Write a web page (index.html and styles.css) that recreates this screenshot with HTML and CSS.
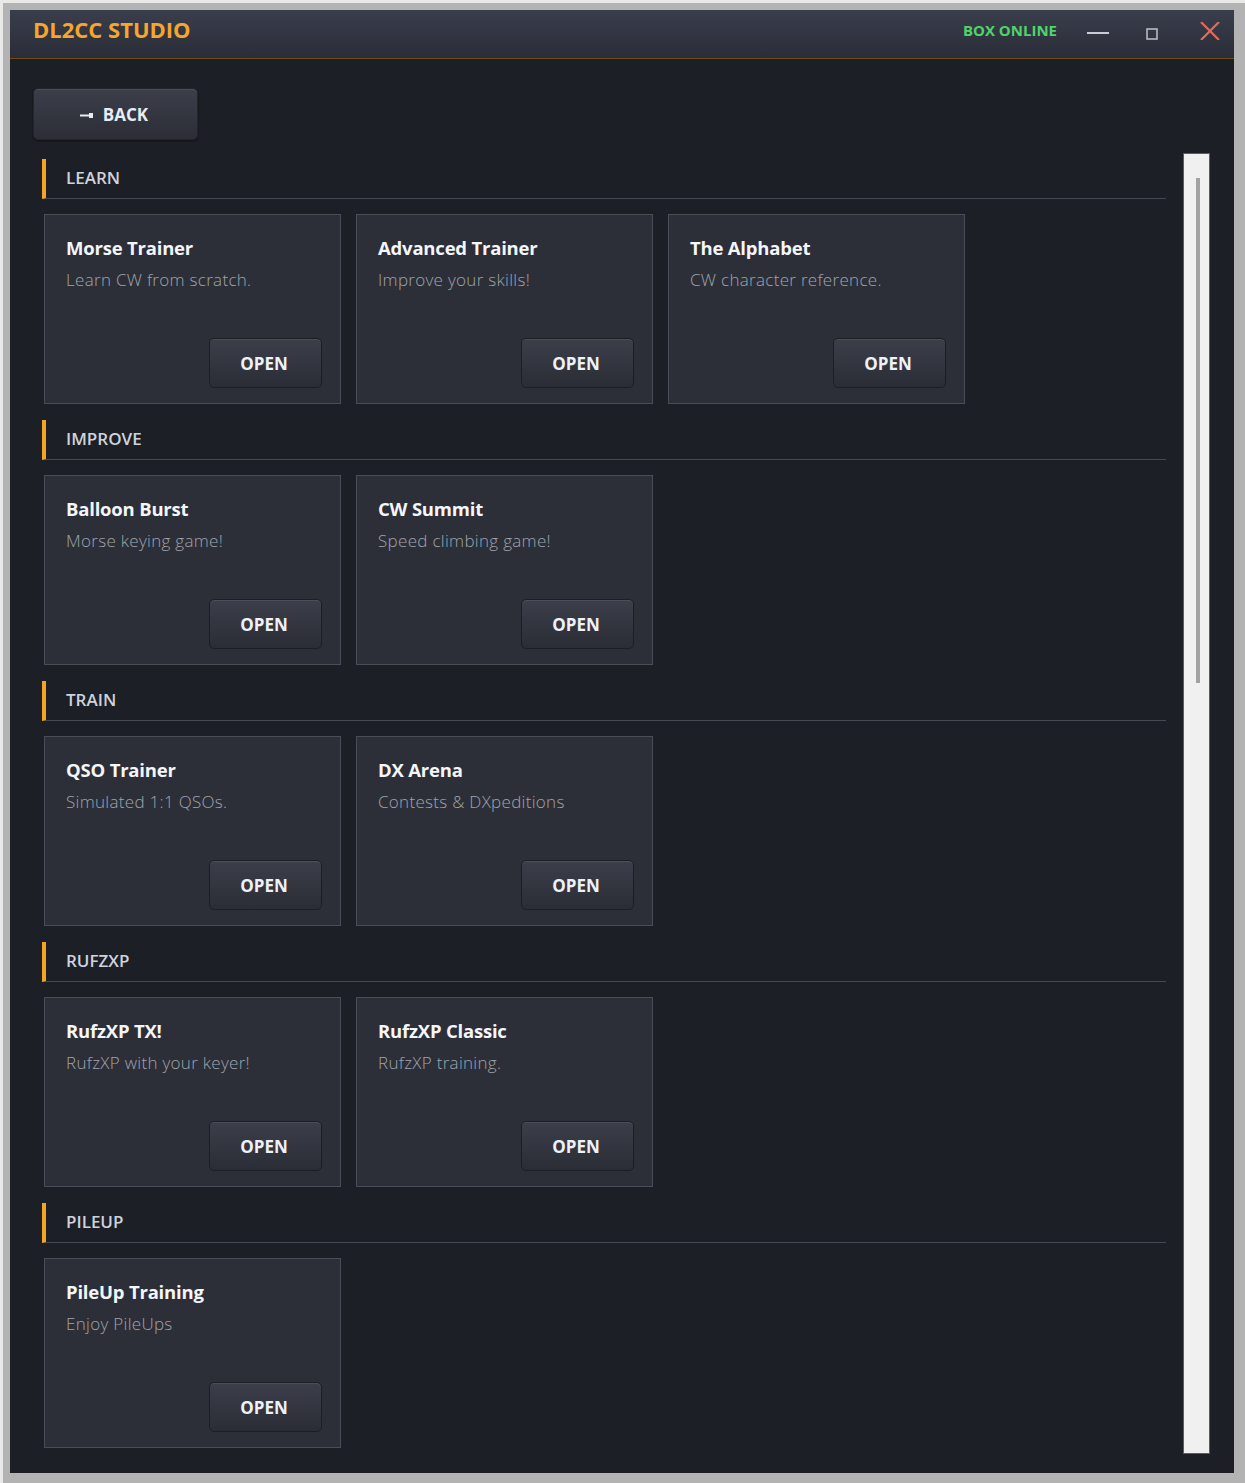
FILE: index.html
```html
<!DOCTYPE html>
<html lang="en">
<head>
<meta charset="UTF-8">
<meta name="viewport" content="width=device-width, initial-scale=1.0">
<title>DL2CC Studio</title>
<link rel="stylesheet" href="styles.css">
</head>
<body>
<div class="frame">
  <div class="window">
    <header class="titlebar">
      <span class="app-title">DL2CC STUDIO</span>
      <span class="status">BOX ONLINE</span>
      <span class="win-btn win-min"><svg width="22" height="4" viewBox="0 0 22 4"><line x1="0" y1="2" x2="22" y2="2" stroke="#c9ccd6" stroke-width="2"/></svg></span>
      <span class="win-btn win-max"><svg width="12" height="12" viewBox="0 0 12 12"><rect x="1" y="1" width="10" height="10" fill="none" stroke="#bfc2cc" stroke-width="1.5"/></svg></span>
      <span class="win-btn win-close"><svg width="20" height="18" viewBox="0 0 20 18"><path d="M1 0 L19 18 M19 0 L1 18" stroke="#e5695b" stroke-width="2.2"/></svg></span>
    </header>

    <main class="content">
      <button class="back-btn"><svg class="back-icon" width="14" height="8" viewBox="0 0 14 8"><line x1="0" y1="4.5" x2="13" y2="4.5" stroke="#e8ecf4" stroke-width="2"/><rect x="9" y="2" width="4" height="5" fill="#e8ecf4"/></svg>BACK</button>

      <div class="scroll-area">
        <div class="sections">
          <section class="group">
            <h3 class="group-title">LEARN</h3>
            <div class="cards">
              <div class="card">
                <h4>Morse Trainer</h4>
                <p>Learn CW from scratch.</p>
                <button class="open-btn">OPEN</button>
              </div>
              <div class="card">
                <h4>Advanced Trainer</h4>
                <p>Improve your skills!</p>
                <button class="open-btn">OPEN</button>
              </div>
              <div class="card">
                <h4>The Alphabet</h4>
                <p>CW character reference.</p>
                <button class="open-btn">OPEN</button>
              </div>
            </div>
          </section>

          <section class="group">
            <h3 class="group-title">IMPROVE</h3>
            <div class="cards">
              <div class="card">
                <h4>Balloon Burst</h4>
                <p>Morse keying game!</p>
                <button class="open-btn">OPEN</button>
              </div>
              <div class="card">
                <h4>CW Summit</h4>
                <p>Speed climbing game!</p>
                <button class="open-btn">OPEN</button>
              </div>
            </div>
          </section>

          <section class="group">
            <h3 class="group-title">TRAIN</h3>
            <div class="cards">
              <div class="card">
                <h4>QSO Trainer</h4>
                <p>Simulated 1:1 QSOs.</p>
                <button class="open-btn">OPEN</button>
              </div>
              <div class="card">
                <h4>DX Arena</h4>
                <p>Contests &amp; DXpeditions</p>
                <button class="open-btn">OPEN</button>
              </div>
            </div>
          </section>

          <section class="group">
            <h3 class="group-title">RUFZXP</h3>
            <div class="cards">
              <div class="card">
                <h4>RufzXP TX!</h4>
                <p>RufzXP with your keyer!</p>
                <button class="open-btn">OPEN</button>
              </div>
              <div class="card">
                <h4>RufzXP Classic</h4>
                <p>RufzXP training.</p>
                <button class="open-btn">OPEN</button>
              </div>
            </div>
          </section>

          <section class="group">
            <h3 class="group-title">PILEUP</h3>
            <div class="cards">
              <div class="card">
                <h4>PileUp Training</h4>
                <p>Enjoy PileUps</p>
                <button class="open-btn">OPEN</button>
              </div>
            </div>
          </section>
        </div>

        <div class="scrollbar"><div class="thumb"></div></div>
      </div>
    </main>
  </div>
</div>
</body>
</html>
```

FILE: styles.css
```css
* {
  box-sizing: border-box;
}
body {
  margin: 0;
  padding: 0;
  background-color: #b3b3b3;
  font-family: "Open Sans", "Noto Sans", sans-serif;
}
.frame {
  width: 1245px;
  height: 1483px;
  padding: 7px 11px 10px 7px;
  background-color: #b3b3b3;
  border-top: 3px solid #e9e9e9;
  border-left: 3px solid #e9e9e9;
}
.window {
  width: 1224px;
  height: 1463px;
  background-color: #1d1f26;
  display: flex;
  flex-direction: column;
}
.titlebar {
  height: 49px;
  display: flex;
  align-items: center;
  padding-left: 23px;
  background: linear-gradient(#3a3e4c, #2a2d37);
  border-bottom: 1px solid #6f4c18;
}
.app-title {
  color: #f6a62e;
  font-weight: 700;
  font-size: 22px;
  letter-spacing: 0;
  flex: 1;
  margin-bottom: 10px;
}
.status {
  color: #4fd46a;
  font-weight: 700;
  font-size: 15px;
  letter-spacing: 0;
  margin-bottom: 9px;
}
.win-btn {
  display: flex;
  align-items: center;
  justify-content: center;
  width: 28px;
  height: 28px;
}
.win-min {
  margin-left: 27px;
  margin-bottom: 2px;
}
.win-max {
  margin-left: 26px;
  margin-bottom: 1px;
}
.win-close {
  margin-left: 30px;
  margin-right: 10px;
  margin-bottom: 7px;
}
.content {
  flex: 1;
  display: flex;
  flex-direction: column;
  padding: 29px 24px 19px 23px;
  min-height: 0;
}
.back-btn {
  width: 165px;
  height: 52px;
  display: flex;
  align-items: center;
  justify-content: center;
  gap: 9px;
  font-family: inherit;
  font-size: 17px;
  font-weight: 700;
  color: #e8ecf4;
  background: linear-gradient(#3c3f4a, #2b2e36);
  border: 1px solid #24262d;
  border-radius: 5px;
  box-shadow: inset 0 1px 0 #4a4e5a, 0 1px 2px rgba(0, 0, 0, 0.5);
  cursor: pointer;
  padding: 0 3px 0 0;
}
.back-icon {
  margin-top: 1px;
}
.scroll-area {
  flex: 1;
  display: flex;
  margin-top: 13px;
  min-height: 0;
  overflow: hidden;
}
.sections {
  width: 1124px;
  margin-left: 9px;
  padding-top: 6px;
}
.group {
  margin-bottom: 16px;
}
.group-title {
  margin: 0;
  height: 40px;
  display: flex;
  align-items: center;
  padding-left: 20px;
  padding-bottom: 2px;
  border-left: 4px solid #f5a524;
  border-bottom: 1px solid #464954;
  color: #cfd3dc;
  font-size: 17px;
  font-weight: 600;
  letter-spacing: 0;
}
.cards {
  display: flex;
  gap: 15px;
  margin-top: 15px;
  padding-left: 2px;
}
.card {
  width: 297px;
  height: 190px;
  display: flex;
  flex-direction: column;
  padding: 20px 18px 15px 21px;
  background-color: #2c2f38;
  border: 1px solid #4a4d58;
}
.card h4 {
  margin: 0;
  color: #f4f6fa;
  font-size: 18.5px;
  font-weight: 700;
  line-height: 26px;
  letter-spacing: -0.2px;
}
.card p {
  margin: 8px 0 0;
  color: #a0a4ae;
  font-size: 17px;
  font-weight: 300;
  line-height: 22px;
  letter-spacing: 0.3px;
}
.open-btn {
  margin-top: auto;
  align-self: flex-end;
  width: 113px;
  height: 50px;
  padding: 0 3px 0 0;
  font-family: inherit;
  font-size: 17px;
  font-weight: 700;
  color: #eef1f7;
  background: linear-gradient(#3c3f4a, #2a2d35);
  border: 1px solid #1c1e24;
  border-radius: 5px;
  box-shadow: inset 0 1px 0 #4b4f5b;
  cursor: pointer;
}
.scrollbar {
  width: 27px;
  height: 1301px;
  margin-left: 17px;
  background-color: #f0f0f0;
  border: 1px solid #5a5c62;
  padding: 24px 0 0 12px;
}
.thumb {
  width: 4px;
  height: 505px;
  background-color: #a2a2a2;
}
```
